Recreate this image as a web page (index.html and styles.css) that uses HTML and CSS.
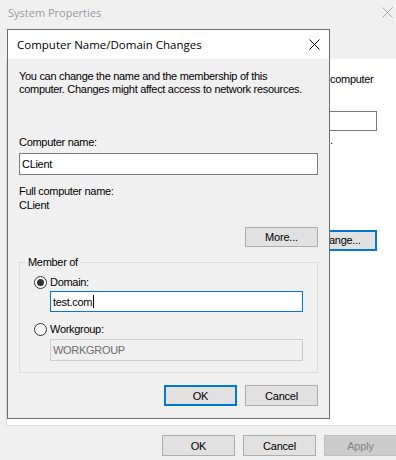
FILE: index.html
```html
<!DOCTYPE html>
<html lang="en">
<head>
    <meta charset="UTF-8">
    <title>Computer Name/Domain Changes</title>
    <link rel="stylesheet" href="styles.css">
</head>
<body>
    <div class="window">
        <div class="win-title">
            <span>System Properties</span>
            <svg class="win-close" width="11" height="11" viewBox="0 0 11 11"><path d="M0.5 0.5L10.5 10.5M10.5 0.5L0.5 10.5" stroke="#a8a8a8" stroke-width="1"/></svg>
        </div>
        <div class="tab-strip"></div>
        <div class="panel">
            <div class="panel-side">
                <div class="side-text">computer</div>
                <div class="side-box"></div>
                <div class="side-dot">.</div>
                <div class="side-btn">ange...</div>
            </div>
        </div>
        <div class="footer">
            <button class="btn">OK</button>
            <button class="btn">Cancel</button>
            <button class="btn btn-disabled">Apply</button>
        </div>
    </div>

    <!-- dialog window on top of System Properties -->
    <div class="dialog">
        <div class="dlg-title">
            <span>Computer Name/Domain Changes</span>
            <svg width="11" height="11" viewBox="0 0 11 11"><path d="M0.5 0.5L10.5 10.5M10.5 0.5L0.5 10.5" stroke="#000" stroke-width="1"/></svg>
        </div>
        <div class="dlg-body">
            <p class="intro">You can change the name and the membership of this<br>computer. Changes might affect access to network resources.</p>

            <div class="label">Computer name:</div>
            <div class="input">CLient</div>

            <div class="full-name">
                <div>Full computer name:</div>
                <div>CLient</div>
            </div>

            <div class="more-row">
                <button class="btn">More...</button>
            </div>

            <fieldset class="group">
                <legend>Member of</legend>
                <div class="radio-row">
                    <span class="radio checked"></span>
                    <span>Domain:</span>
                </div>
                <div class="input input-focus">test.com<span class="caret"></span></div>
                <div class="radio-row second">
                    <span class="radio"></span>
                    <span>Workgroup:</span>
                </div>
                <div class="input input-disabled">WORKGROUP</div>
            </fieldset>

            <div class="dlg-buttons">
                <button class="btn btn-default">OK</button>
                <button class="btn">Cancel</button>
            </div>
        </div>
    </div>
</body>
</html>
```

FILE: styles.css
```css
body {
    margin: 0;
    width: 396px;
    height: 460px;
    overflow: hidden;
    background: #f0f0f0;
    font-family: "Liberation Sans", Arial, sans-serif;
    font-size: 11px;
    letter-spacing: -0.3px;
    color: #000;
    position: relative;
}

.window {
    height: 460px;
    display: flex;
    flex-direction: column;
}

.win-title {
    height: 28px;
    flex-shrink: 0;
    display: flex;
    align-items: center;
    justify-content: space-between;
    padding: 0 3px 4px 8px;
    box-sizing: border-box;
    font-family: "Open Sans", "Liberation Sans", sans-serif;
    font-size: 11px;
    letter-spacing: 0;
    color: #9a9a9a;
}

.tab-strip {
    height: 31px;
    flex-shrink: 0;
}

.panel {
    height: 367px;
    flex-shrink: 0;
    margin-left: 6px;
    width: 400px;
    background: #fff;
    border: 1px solid #dadada;
    border-top: none;
    box-sizing: border-box;
}

.panel-side {
    margin-left: 323px;
    padding-top: 13px;
    display: flex;
    flex-direction: column;
}

.side-text {
    line-height: 14px;
}

.side-box {
    margin-top: 25px;
    width: 48px;
    height: 20px;
    border: 1px solid #7a7a7a;
    margin-left: -1px;
    box-sizing: border-box;
}

.side-dot {
    line-height: 10px;
    margin-top: 4px;
}

.side-btn {
    margin-top: 85px;
    margin-left: -8px;
    width: 55px;
    height: 21px;
    border: 2px solid #0078d7;
    background: #e1e1e1;
    box-sizing: border-box;
    line-height: 17px;
    padding-left: 5px;
}

.footer {
    display: flex;
    gap: 8px;
    padding: 9px 0 0 162px;
}

.btn {
    width: 73px;
    height: 21px;
    padding: 0;
    background: #e1e1e1;
    border: 1px solid #adadad;
    font-family: "Liberation Sans", Arial, sans-serif;
    font-size: 11px;
    letter-spacing: -0.2px;
    color: #000;
    flex-shrink: 0;
}

.btn-disabled {
    background: #cccccc;
    border-color: #bfbfbf;
    color: #838383;
}

.btn-default {
    border: 2px solid #0078d7;
}

.dialog {
    position: absolute;
    left: 7px;
    top: 29px;
    width: 323px;
    height: 390px;
    border: 1px solid #6e6e6e;
    box-sizing: border-box;
    background: #f0f0f0;
    display: flex;
    flex-direction: column;
}

.dlg-title {
    height: 29px;
    flex-shrink: 0;
    background: #fff;
    display: flex;
    align-items: center;
    justify-content: space-between;
    padding: 0 9px 0 9px;
    font-family: "Open Sans", "Liberation Sans", sans-serif;
    font-size: 11.5px;
    letter-spacing: 0;
}

.dlg-body {
    padding: 11px 11px 0 11px;
    display: flex;
    flex-direction: column;
}

.intro {
    margin: 0;
    line-height: 13px;
}

.label {
    margin-top: 40px;
    line-height: 13px;
}

.input {
    margin-top: 4px;
    height: 22px;
    border: 1px solid #7a7a7a;
    background: #fff;
    box-sizing: border-box;
    padding-left: 2px;
    line-height: 20px;
    display: flex;
    align-items: center;
}

.full-name {
    margin-top: 9px;
    line-height: 14px;
}

.more-row {
    margin-top: 15px;
    display: flex;
    justify-content: flex-end;
}

.more-row .btn {
    height: 20px;
}

.group {
    margin: 9px 0 0 0;
    padding: 0 14px 11px 14px;
    border: 1px solid #dcdcdc;
    min-width: 0;
}

.group legend {
    padding: 0 2px;
    margin-left: -8px;
    line-height: 13px;
}

.radio-row {
    margin-top: 6px;
    height: 14px;
    display: flex;
    align-items: center;
    gap: 3px;
}

.radio-row.second {
    margin-top: 10px;
}

.radio {
    width: 13px;
    height: 13px;
    border: 1px solid #333;
    border-radius: 50%;
    box-sizing: border-box;
    background: #fff;
    display: flex;
    align-items: center;
    justify-content: center;
}

.radio.checked::after {
    content: "";
    width: 7px;
    height: 7px;
    border-radius: 50%;
    background: #333;
}

.group .input {
    margin-left: 16px;
    margin-top: 2px;
    height: 21px;
}

.input-focus {
    border-color: #0078d7;
}

.caret {
    width: 1px;
    height: 13px;
    background: #000;
    margin-left: 1px;
}

.input-disabled {
    background: #f0f0f0;
    border-color: #cccccc;
    color: #6d6d6d;
}

.group .input-disabled {
    margin-top: 3px;
    height: 22px;
}

.dlg-buttons {
    margin-top: 12px;
    display: flex;
    justify-content: flex-end;
    gap: 8px;
}
```
